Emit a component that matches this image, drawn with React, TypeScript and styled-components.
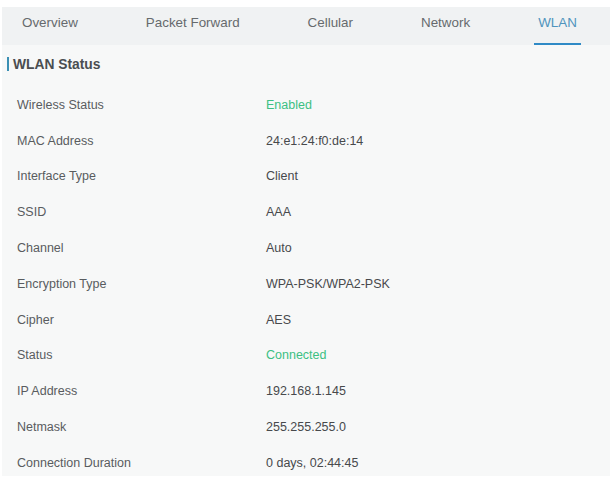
import * as React from 'react'
import styled, { createGlobalStyle } from 'styled-components'

const GlobalStyle = createGlobalStyle`
  html, body {
    margin: 0;
    padding: 0;
    background: #ffffff;
  }
  body {
    font-family: "Liberation Sans", Arial, sans-serif;
  }
`

const Page = styled.div`
  width: 613px;
  height: 483px;
  padding: 7px 3px 0 2px;
  box-sizing: border-box;
  overflow: hidden;
`

const TabBar = styled.nav`
  display: flex;
  gap: 60px;
  height: 38px;
  padding-left: 16px;
  background: #f0f2f3;
`

const Tab = styled.div<{ $active?: boolean }>`
  position: relative;
  padding: 8px 4px 0;
  font-size: 13.4px;
  line-height: 15px;
  color: ${(p) => (p.$active ? '#4f94bd' : '#666a6d')};
  white-space: nowrap;
  cursor: pointer;

  &::after {
    content: '';
    display: ${(p) => (p.$active ? 'block' : 'none')};
    position: absolute;
    left: 0;
    right: 0;
    bottom: 0;
    height: 2px;
    background: #2f8ac6;
  }
`

const Panel = styled.section`
  height: 431px;
  background: #f7f8f8;
  overflow: hidden;
`

const SectionTitle = styled.h2`
  margin: 0;
  height: 42px;
  padding: 0 0 4px 5px;
  box-sizing: border-box;
  display: flex;
  align-items: center;
  font-size: 13.8px;
  font-weight: bold;
  color: #4a4d50;

  &::before {
    content: '';
    width: 2px;
    height: 14px;
    margin-right: 4px;
    background: #3b8fb3;
  }
`

const Row = styled.div`
  display: flex;
  align-items: center;
  height: 35.8px;
  font-size: 12.5px;
`

const Label = styled.div`
  width: 249px;
  padding-left: 15px;
  color: #595c5f;
`

const Value = styled.div<{ $ok?: boolean }>`
  color: ${(p) => (p.$ok ? '#3cc083' : '#47494c')};
`

const tabs = ['Overview', 'Packet Forward', 'Cellular', 'Network', 'WLAN']

const rows: { label: string; value: string; ok?: boolean }[] = [
  { label: 'Wireless Status', value: 'Enabled', ok: true },
  { label: 'MAC Address', value: '24:e1:24:f0:de:14' },
  { label: 'Interface Type', value: 'Client' },
  { label: 'SSID', value: 'AAA' },
  { label: 'Channel', value: 'Auto' },
  { label: 'Encryption Type', value: 'WPA-PSK/WPA2-PSK' },
  { label: 'Cipher', value: 'AES' },
  { label: 'Status', value: 'Connected', ok: true },
  { label: 'IP Address', value: '192.168.1.145' },
  { label: 'Netmask', value: '255.255.255.0' },
  { label: 'Connection Duration', value: '0 days, 02:44:45' },
]

export default function App() {
  return (
    <>
      <GlobalStyle />
      <Page>
        <TabBar>
          {tabs.map((t) => (
            <Tab key={t} $active={t === 'WLAN'}>
              {t}
            </Tab>
          ))}
        </TabBar>
        <Panel>
          <SectionTitle>WLAN Status</SectionTitle>
          {rows.map((r) => (
            <Row key={r.label}>
              <Label>{r.label}</Label>
              <Value $ok={r.ok}>{r.value}</Value>
            </Row>
          ))}
        </Panel>
      </Page>
    </>
  )
}
